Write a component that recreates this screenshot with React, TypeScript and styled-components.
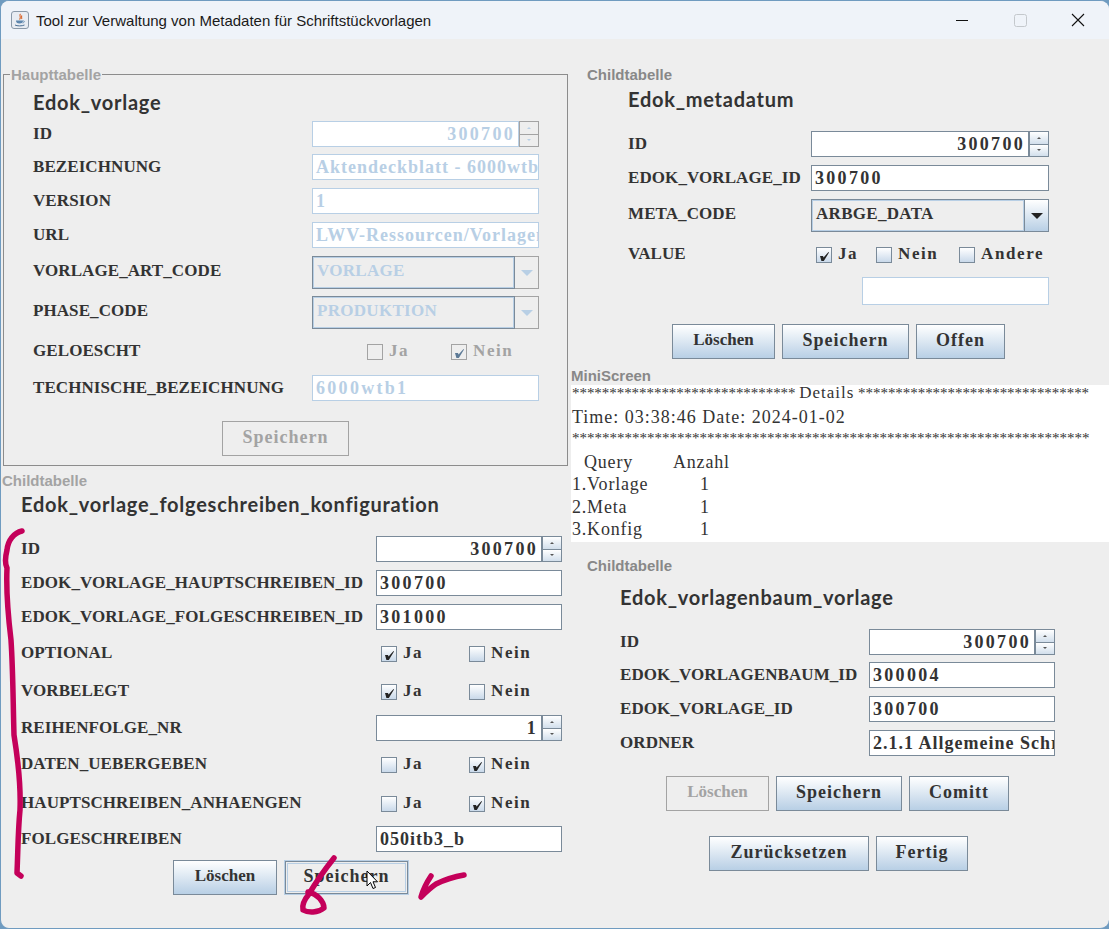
import React from 'react'
import styled, { createGlobalStyle } from 'styled-components'

const GlobalStyle = createGlobalStyle`
  html, body {
    margin: 0;
    padding: 0;
    background: #6f9bc0;
  }
  * {
    box-sizing: border-box;
  }
`

const DARK = '#333'
const DISABLED_BLUE = '#b8cfe5'
const METAL_BORDER = '#7a8a99'

const CheckMark = ({ color = '#222' }: { color?: string }) => (
  <svg width="13" height="13" viewBox="0 0 13 13">
    <path d="M2 7 L5 7 L5.6 8.4 L10.5 3 L11 3.6 L5.8 12 L3.4 12 Z" fill={color} />
  </svg>
)

const JavaIcon = () => (
  <svg width="18" height="18" viewBox="0 0 18 18">
    <rect x="0.5" y="0.5" width="17" height="17" rx="2.5" fill="#e8ecf2" stroke="#8a99a8" />
    <path d="M9.5 3 C7.5 5 11 6 8.5 8.5 M11 4.5 C9.5 6 11.5 6.5 10.5 8" fill="none" stroke="#d9662b" strokeWidth="1.1" />
    <path d="M5 9.5 H12 C12 11.5 11 12.5 8.5 12.5 C6 12.5 5 11.5 5 9.5 Z" fill="#5d86ad" />
    <path d="M12 10 C14 9.5 14 11.5 11.5 12" fill="none" stroke="#5d86ad" strokeWidth="0.8" />
    <path d="M4 14 C6 15.2 11 15.2 13.5 14" fill="none" stroke="#4a6f94" strokeWidth="1" />
  </svg>
)

const Annotations = () => (
  <InkLayer width="1109" height="929" viewBox="0 0 1109 929">
    <g fill="none" stroke="#c4005a" strokeWidth="5.5" strokeLinecap="round" strokeLinejoin="round">
      <path d="M22 531 C14 533 8 540 7 550 C5 558 5 564 7 568 C6 590 8 615 11 640 C13 670 13 700 14 735 C18 760 21 785 20 810 C18 830 18 850 17 873 L21 876" />
      <path d="M334 858 C326 868 316 882 309 894 C304 900 302 906 303 910 C308 913 318 913 324 908 C324 902 318 894 308 892" />
      <path d="M464 875 C452 877 444 880 436 884 C430 888 425 893 421 897 C423 890 427 882 431 876" />
    </g>
  </InkLayer>
)

const Cursor = () => (
  <CursorLayer width="13" height="20" viewBox="0 0 13 20">
    <path d="M1 1 V16 L4.5 12.5 L7 18.5 L9.5 17.5 L7 11.8 H11.5 Z" fill="#fff" stroke="#000" strokeWidth="1" />
  </CursorLayer>
)

const Field = ({ value, disabled, right, wide }: { value?: string; disabled?: boolean; right?: boolean; wide?: boolean }) => (
  <TextField $disabled={disabled} $right={right} $wide={wide}>
    {value}
  </TextField>
)

const Spinner = ({ value, disabled }: { value: string; disabled?: boolean }) => (
  <SpinnerWrap>
    <Field value={value} disabled={disabled} right wide />
    <SpinnerButtons>
      <SpinnerButton $disabled={disabled}>
        <TinyArrow $disabled={disabled} $up />
      </SpinnerButton>
      <SpinnerButton $disabled={disabled}>
        <TinyArrow $disabled={disabled} />
      </SpinnerButton>
    </SpinnerButtons>
  </SpinnerWrap>
)

const Combo = ({ value, disabled }: { value: string; disabled?: boolean }) => (
  <ComboWrap>
    <ComboValue $disabled={disabled}>{value}</ComboValue>
    <ComboArrow $disabled={disabled}>
      <ComboTriangle $disabled={disabled} />
    </ComboArrow>
  </ComboWrap>
)

const Check = ({ label, checked, disabled }: { label: string; checked?: boolean; disabled?: boolean }) => (
  <CheckItem $disabled={disabled}>
    <CheckBox $disabled={disabled}>
      {checked && <CheckMark color={disabled ? '#5d7a96' : '#222'} />}
    </CheckBox>
    {label}
  </CheckItem>
)

export default function App() {
  return (
    <>
      <GlobalStyle />
      <Window>
        <TitleBar>
          <JavaIcon />
          <TitleText>Tool zur Verwaltung von Metadaten für Schriftstückvorlagen</TitleText>
          <WindowButtons>
            <WinButton>
              <svg width="12" height="12" viewBox="0 0 12 12">
                <path d="M0 6.5 H12" stroke="#111" strokeWidth="1" />
              </svg>
            </WinButton>
            <WinButton>
              <svg width="13" height="13" viewBox="0 0 13 13">
                <rect x="0.5" y="0.5" width="12" height="12" rx="2" fill="none" stroke="#c4c8cc" />
              </svg>
            </WinButton>
            <WinButton>
              <svg width="14" height="14" viewBox="0 0 14 14">
                <path d="M1 1 L13 13 M13 1 L1 13" stroke="#111" strokeWidth="1.1" />
              </svg>
            </WinButton>
          </WindowButtons>
        </TitleBar>

        <Body>
          <LeftColumn>
            <MainFieldset>
              <Legend>Haupttabelle</Legend>
              <Form $label={279} $field={227} $pad={29}>
                <TableTitle $top={7}>Edok_vorlage</TableTitle>
                <Row $top={7}>
                  <Label>ID</Label>
                  <Spinner value="300700" disabled />
                </Row>
                <Row $top={7}>
                  <Label>BEZEICHNUNG</Label>
                  <Field value="Aktendeckblatt - 6000wtb1" disabled />
                </Row>
                <Row $top={8}>
                  <Label>VERSION</Label>
                  <Field value="1" disabled />
                </Row>
                <Row $top={8}>
                  <Label>URL</Label>
                  <Field value="LWV-Ressourcen/Vorlagen" disabled />
                </Row>
                <Row $top={8}>
                  <Label $raised>VORLAGE_ART_CODE</Label>
                  <Combo value="VORLAGE" disabled />
                </Row>
                <Row $top={7}>
                  <Label $raised>PHASE_CODE</Label>
                  <Combo value="PRODUKTION" disabled />
                </Row>
                <Row $top={12}>
                  <Label>GELOESCHT</Label>
                  <CheckGroup $pad={55} $cols="84px 1fr">
                    <Check label="Ja" disabled />
                    <Check label="Nein" checked disabled />
                  </CheckGroup>
                </Row>
                <Row $top={14}>
                  <Label>TECHNISCHE_BEZEICHNUNG</Label>
                  <Field value="6000wtb1" disabled wide />
                </Row>
                <ButtonRow $left={189} $top={20}>
                  <Button $w={127} disabled>
                    Speichern
                  </Button>
                </ButtonRow>
              </Form>
            </MainFieldset>

            <Caption $left={1} $top={6} $muted>Childtabelle</Caption>
            <Form $label={355} $field={186} $pad={20}>
              <TableTitle $top={3}>Edok_vorlage_folgeschreiben_konfiguration</TableTitle>
              <Row $top={20}>
                <Label>ID</Label>
                <Spinner value="300700" />
              </Row>
              <Row $top={8}>
                <Label>EDOK_VORLAGE_HAUPTSCHREIBEN_ID</Label>
                <Field value="300700" wide />
              </Row>
              <Row $top={8}>
                <Label>EDOK_VORLAGE_FOLGESCHREIBEN_ID</Label>
                <Field value="301000" wide />
              </Row>
              <Row $top={13}>
                <Label>OPTIONAL</Label>
                <CheckGroup $pad={5} $cols="88px 1fr">
                  <Check label="Ja" checked />
                  <Check label="Nein" />
                </CheckGroup>
              </Row>
              <Row $top={18}>
                <Label>VORBELEGT</Label>
                <CheckGroup $pad={5} $cols="88px 1fr">
                  <Check label="Ja" checked />
                  <Check label="Nein" />
                </CheckGroup>
              </Row>
              <Row $top={14}>
                <Label>REIHENFOLGE_NR</Label>
                <Spinner value="1" />
              </Row>
              <Row $top={13}>
                <Label>DATEN_UEBERGEBEN</Label>
                <CheckGroup $pad={5} $cols="88px 1fr">
                  <Check label="Ja" />
                  <Check label="Nein" checked />
                </CheckGroup>
              </Row>
              <Row $top={19}>
                <Label>HAUPTSCHREIBEN_ANHAENGEN</Label>
                <CheckGroup $pad={5} $cols="88px 1fr">
                  <Check label="Ja" />
                  <Check label="Nein" checked />
                </CheckGroup>
              </Row>
              <Row $top={13}>
                <Label>FOLGESCHREIBEN</Label>
                <Field value="050itb3_b" />
              </Row>
              <ButtonRow $left={152} $top={8}>
                <Button $w={104} $narrow>Löschen</Button>
                <Button $w={125} $focused>
                  Speichern
                </Button>
              </ButtonRow>
            </Form>
          </LeftColumn>

          <RightColumn>
            <Caption $left={16} $top={27}>Childtabelle</Caption>
            <Form $label={183} $field={238} $pad={57}>
              <TableTitle $top={4}>Edok_metadatum</TableTitle>
              <Row $top={20}>
                <Label>ID</Label>
                <Spinner value="300700" />
              </Row>
              <Row $top={8}>
                <Label>EDOK_VORLAGE_ID</Label>
                <Field value="300700" wide />
              </Row>
              <Row $top={8}>
                <Label $raised>META_CODE</Label>
                <Combo value="ARBGE_DATA" />
              </Row>
              <Row $top={12}>
                <Label>VALUE</Label>
                <CheckGroup $pad={5} $cols="60px 83px 1fr">
                  <Check label="Ja" checked />
                  <Check label="Nein" />
                  <Check label="Andere" />
                </CheckGroup>
              </Row>
              <ExtraField $top={13} />
              <ButtonRow $left={44} $top={19}>
                <Button $w={103} $narrow>Löschen</Button>
                <Button $w={127}>Speichern</Button>
                <Button $w={89}>Offen</Button>
              </ButtonRow>
            </Form>

            <Caption $left={0} $top={8}>MiniScreen</Caption>
            <MiniScreen>
              <StarLine $h={15} $tight>
                {'*'.repeat(30)} <DetailsWord>Details</DetailsWord> {'*'.repeat(31)}
              </StarLine>
              <MiniLine $top={4} $h={27}>Time: 03:38:46 Date: 2024-01-02</MiniLine>
              <StarLine $h={14}>{'*'.repeat(69)}</StarLine>
              <MiniRow $top={5} $h={24} $indent={12}>
                <span>Query</span>
                <span>Anzahl</span>
              </MiniRow>
              <MiniRow $h={20}>
                <span>1.Vorlage</span>
                <CountCell>1</CountCell>
              </MiniRow>
              <MiniRow $h={26}>
                <span>2.Meta</span>
                <CountCell>1</CountCell>
              </MiniRow>
              <MiniRow $h={18}>
                <span>3.Konfig</span>
                <CountCell>1</CountCell>
              </MiniRow>
            </MiniScreen>

            <Caption $left={16} $top={15}>Childtabelle</Caption>
            <Form $label={249} $field={186} $pad={49}>
              <TableTitle $top={11}>Edok_vorlagenbaum_vorlage</TableTitle>
              <Row $top={20}>
                <Label>ID</Label>
                <Spinner value="300700" />
              </Row>
              <Row $top={7}>
                <Label>EDOK_VORLAGENBAUM_ID</Label>
                <Field value="300004" wide />
              </Row>
              <Row $top={8}>
                <Label>EDOK_VORLAGE_ID</Label>
                <Field value="300700" wide />
              </Row>
              <Row $top={8}>
                <Label>ORDNER</Label>
                <Field value="2.1.1 Allgemeine Schreiben" />
              </Row>
              <ButtonRow $left={46} $top={20}>
                <Button $w={103} $narrow disabled>
                  Löschen
                </Button>
                <Button $w={126}>Speichern</Button>
                <Button $w={100}>Comitt</Button>
              </ButtonRow>
              <ButtonRow $left={89} $top={25}>
                <Button $w={160}>Zurücksetzen</Button>
                <Button $w={92}>Fertig</Button>
              </ButtonRow>
            </Form>
          </RightColumn>
        </Body>

        <Cursor />
        <Annotations />
      </Window>
    </>
  )
}

const Window = styled.div`
  position: relative;
  width: 1109px;
  height: 929px;
  display: flex;
  flex-direction: column;
  overflow: hidden;
  background: #eeeeee;
  border: 1px solid #6f9bc0;
  border-right: none;
  border-radius: 9px;
`

const TitleBar = styled.div`
  height: 38px;
  flex: none;
  display: flex;
  align-items: center;
  padding-left: 10px;
  background: #eff3f9;
`

const TitleText = styled.span`
  margin-left: 7px;
  font: 15px 'Liberation Sans', Arial, sans-serif;
  color: #1a1a1a;
`

const WindowButtons = styled.div`
  margin-left: auto;
  padding-right: 2px;
  display: flex;
  height: 100%;
`

const WinButton = styled.div`
  width: 58px;
  display: flex;
  align-items: center;
  justify-content: center;
`

const Body = styled.div`
  flex: 1;
  display: grid;
  grid-template-columns: 570px 1fr;
`

const LeftColumn = styled.div`
  display: flex;
  flex-direction: column;
  padding-top: 27px;
`

const RightColumn = styled.div`
  display: flex;
  flex-direction: column;
`

const MainFieldset = styled.fieldset`
  margin: 0 3px 0 2px;
  padding: 0 0 9px;
  height: 400px;
  border: 1px solid #8c8c8c;
  min-width: 0;
`

const Legend = styled.legend`
  margin-left: 6px;
  padding: 0 1px;
  font: bold 15px/17px 'Liberation Sans', Arial, sans-serif;
  color: #a3a3a3;
`

const Caption = styled.div<{ $left: number; $top: number; $muted?: boolean }>`
  margin: ${({ $top }) => $top}px 0 0 ${({ $left }) => $left}px;
  font: bold 15px/17px 'Liberation Sans', Arial, sans-serif;
  color: ${({ $muted }) => ($muted ? '#a3a3a3' : '#888')};
`

const TableTitle = styled.div<{ $top: number }>`
  margin-top: ${({ $top }) => $top}px;
  height: 24px;
  font: bold 20px/24px 'Lato', 'Noto Sans', sans-serif;
  letter-spacing: 0.75px;
  color: ${DARK};
`

const Form = styled.div<{ $label: number; $field: number; $pad: number }>`
  --label-width: ${({ $label }) => $label}px;
  --field-width: ${({ $field }) => $field}px;
  padding-left: ${({ $pad }) => $pad}px;
  display: flex;
  flex-direction: column;
`

const Row = styled.div<{ $top: number }>`
  margin-top: ${({ $top }) => $top}px;
  display: grid;
  grid-template-columns: var(--label-width) var(--field-width);
  align-items: center;
`

const Label = styled.div<{ $raised?: boolean }>`
  margin-bottom: ${({ $raised }) => ($raised ? 4 : 0)}px;
  font: bold 17px/20px 'Liberation Serif', 'Times New Roman', serif;
  letter-spacing: 0.08px;
  color: ${DARK};
  white-space: nowrap;
`

const TextField = styled.div<{ $disabled?: boolean; $right?: boolean; $wide?: boolean }>`
  flex: 1;
  min-width: 0;
  height: 26px;
  padding: 0 3px;
  overflow: hidden;
  white-space: nowrap;
  background: #fff;
  border: 1px solid ${({ $disabled }) => ($disabled ? DISABLED_BLUE : METAL_BORDER)};
  font: bold 18px/24px 'Liberation Serif', 'Times New Roman', serif;
  letter-spacing: ${({ $wide }) => ($wide ? 2.3 : 1)}px;
  text-align: ${({ $right }) => ($right ? 'right' : 'left')};
  color: ${({ $disabled }) => ($disabled ? DISABLED_BLUE : DARK)};
`

const ExtraField = styled.div<{ $top: number }>`
  margin: ${({ $top }) => $top}px 0 0 234px;
  width: 187px;
  height: 28px;
  background: #fff;
  border: 1px solid ${DISABLED_BLUE};
`

const SpinnerWrap = styled.div`
  display: flex;
  height: 26px;
`

const SpinnerButtons = styled.div`
  width: 20px;
  flex: none;
  display: flex;
  flex-direction: column;
`

const SpinnerButton = styled.div<{ $disabled?: boolean }>`
  flex: 1;
  display: flex;
  align-items: center;
  justify-content: center;
  background: ${({ $disabled }) => ($disabled ? '#eeeeee' : 'linear-gradient(#ffffff, #d2dfec)')};
  border: 1px solid ${({ $disabled }) => ($disabled ? '#a3a3a3' : METAL_BORDER)};
  & + & {
    margin-top: -1px;
  }
`

const TinyArrow = styled.span<{ $up?: boolean; $disabled?: boolean }>`
  width: 0;
  height: 0;
  border-left: 2px solid transparent;
  border-right: 2px solid transparent;
  ${({ $up, $disabled }) =>
    `${$up ? 'border-bottom' : 'border-top'}: 2px solid ${$disabled ? DISABLED_BLUE : '#555'};`}
`

const ComboWrap = styled.div`
  height: 33px;
  display: flex;
`

const ComboValue = styled.div<{ $disabled?: boolean }>`
  flex: 1;
  padding: 0 4px;
  border: 1px solid ${METAL_BORDER};
  box-shadow: inset 0 0 0 1px ${DISABLED_BLUE};
  font: bold 17px/28px 'Liberation Serif', 'Times New Roman', serif;
  letter-spacing: 0.3px;
  color: ${({ $disabled }) => ($disabled ? DISABLED_BLUE : DARK)};
`

const ComboArrow = styled.div<{ $disabled?: boolean }>`
  width: 24px;
  flex: none;
  display: flex;
  align-items: center;
  justify-content: center;
  border: 1px solid ${({ $disabled }) => ($disabled ? '#a3a3a3' : METAL_BORDER)};
  border-left: none;
  background: ${({ $disabled }) => ($disabled ? '#eeeeee' : 'linear-gradient(#ffffff, #b8cfe5)')};
`

const ComboTriangle = styled.span<{ $disabled?: boolean }>`
  width: 0;
  height: 0;
  border-left: 6px solid transparent;
  border-right: 6px solid transparent;
  border-top: 6px solid ${({ $disabled }) => ($disabled ? DISABLED_BLUE : '#222')};
`

const CheckGroup = styled.div<{ $pad: number; $cols: string }>`
  padding-left: ${({ $pad }) => $pad}px;
  display: grid;
  grid-template-columns: ${({ $cols }) => $cols};
  align-items: center;
  height: 20px;
`

const CheckItem = styled.div<{ $disabled?: boolean }>`
  display: flex;
  align-items: center;
  gap: 6px;
  font: bold 17px/20px 'Liberation Serif', 'Times New Roman', serif;
  letter-spacing: 1.6px;
  color: ${({ $disabled }) => ($disabled ? '#a3a3a3' : DARK)};
`

const CheckBox = styled.div<{ $disabled?: boolean }>`
  width: 16px;
  height: 16px;
  flex: none;
  display: flex;
  align-items: center;
  justify-content: center;
  margin-top: 2px;
  background: ${({ $disabled }) => ($disabled ? '#eeeeee' : 'linear-gradient(#ffffff, #c9d9ea)')};
  border: 1px solid ${({ $disabled }) => ($disabled ? '#a3a3a3' : METAL_BORDER)};
`

const ButtonRow = styled.div<{ $left: number; $top: number }>`
  margin: ${({ $top }) => $top}px 0 0 ${({ $left }) => $left}px;
  display: flex;
  gap: 7px;
`

const Button = styled.button<{ $w: number; $focused?: boolean; $narrow?: boolean }>`
  width: ${({ $w }) => $w}px;
  height: 35px;
  padding: 0 0 3px;
  background: linear-gradient(#ffffff, #b8cfe5);
  border: 1px solid ${METAL_BORDER};
  font: bold ${({ $narrow }) => ($narrow ? 17 : 18)}px 'Liberation Serif', 'Times New Roman', serif;
  letter-spacing: ${({ $narrow }) => ($narrow ? 0 : 1)}px;
  color: ${DARK};

  &:disabled {
    background: transparent;
    border-color: #a3a3a3;
    color: #a3a3a3;
  }

  ${({ $focused }) =>
    $focused &&
    `
    background: #eeeeee;
    border-color: ${DISABLED_BLUE};
    box-shadow: inset 0 0 0 1px ${METAL_BORDER}, inset 0 0 0 2px #eeeeee, inset 0 0 0 3px ${DISABLED_BLUE};
  `}
`

const MiniScreen = styled.div`
  margin-top: 1px;
  height: 157px;
  padding-left: 1px;
  background: #fff;
  font: 18px 'Liberation Serif', 'Times New Roman', serif;
  color: ${DARK};
`

const MiniLine = styled.div<{ $h: number; $top: number }>`
  margin-top: ${({ $top }) => $top}px;
  height: ${({ $h }) => $h}px;
  line-height: ${({ $h }) => $h}px;
  letter-spacing: 1px;
`

const StarLine = styled.div<{ $h: number; $tight?: boolean }>`
  height: ${({ $h }) => $h}px;
  line-height: ${({ $h }) => $h}px;
  font-size: 15px;
  letter-spacing: ${({ $tight }) => ($tight ? -0.05 : 0)}px;
  white-space: nowrap;
`

const DetailsWord = styled.span`
  font-size: 17px;
  letter-spacing: 1px;
`

const MiniRow = styled.div<{ $h: number; $indent?: number; $top?: number }>`
  display: grid;
  grid-template-columns: 101px 1fr;
  margin-top: ${({ $top }) => $top ?? 0}px;
  height: ${({ $h }) => $h}px;
  line-height: ${({ $h }) => $h}px;
  padding-left: ${({ $indent }) => $indent ?? 0}px;
  letter-spacing: 0.8px;
  & > span:last-child {
    margin-left: ${({ $indent }) => -($indent ?? 0)}px;
  }
`

const CountCell = styled.span`
  padding-left: 27px;
`

const InkLayer = styled.svg`
  position: absolute;
  left: -1px;
  top: -1px;
  pointer-events: none;
`

const CursorLayer = styled.svg`
  position: absolute;
  left: 365px;
  top: 869px;
  pointer-events: none;
`
